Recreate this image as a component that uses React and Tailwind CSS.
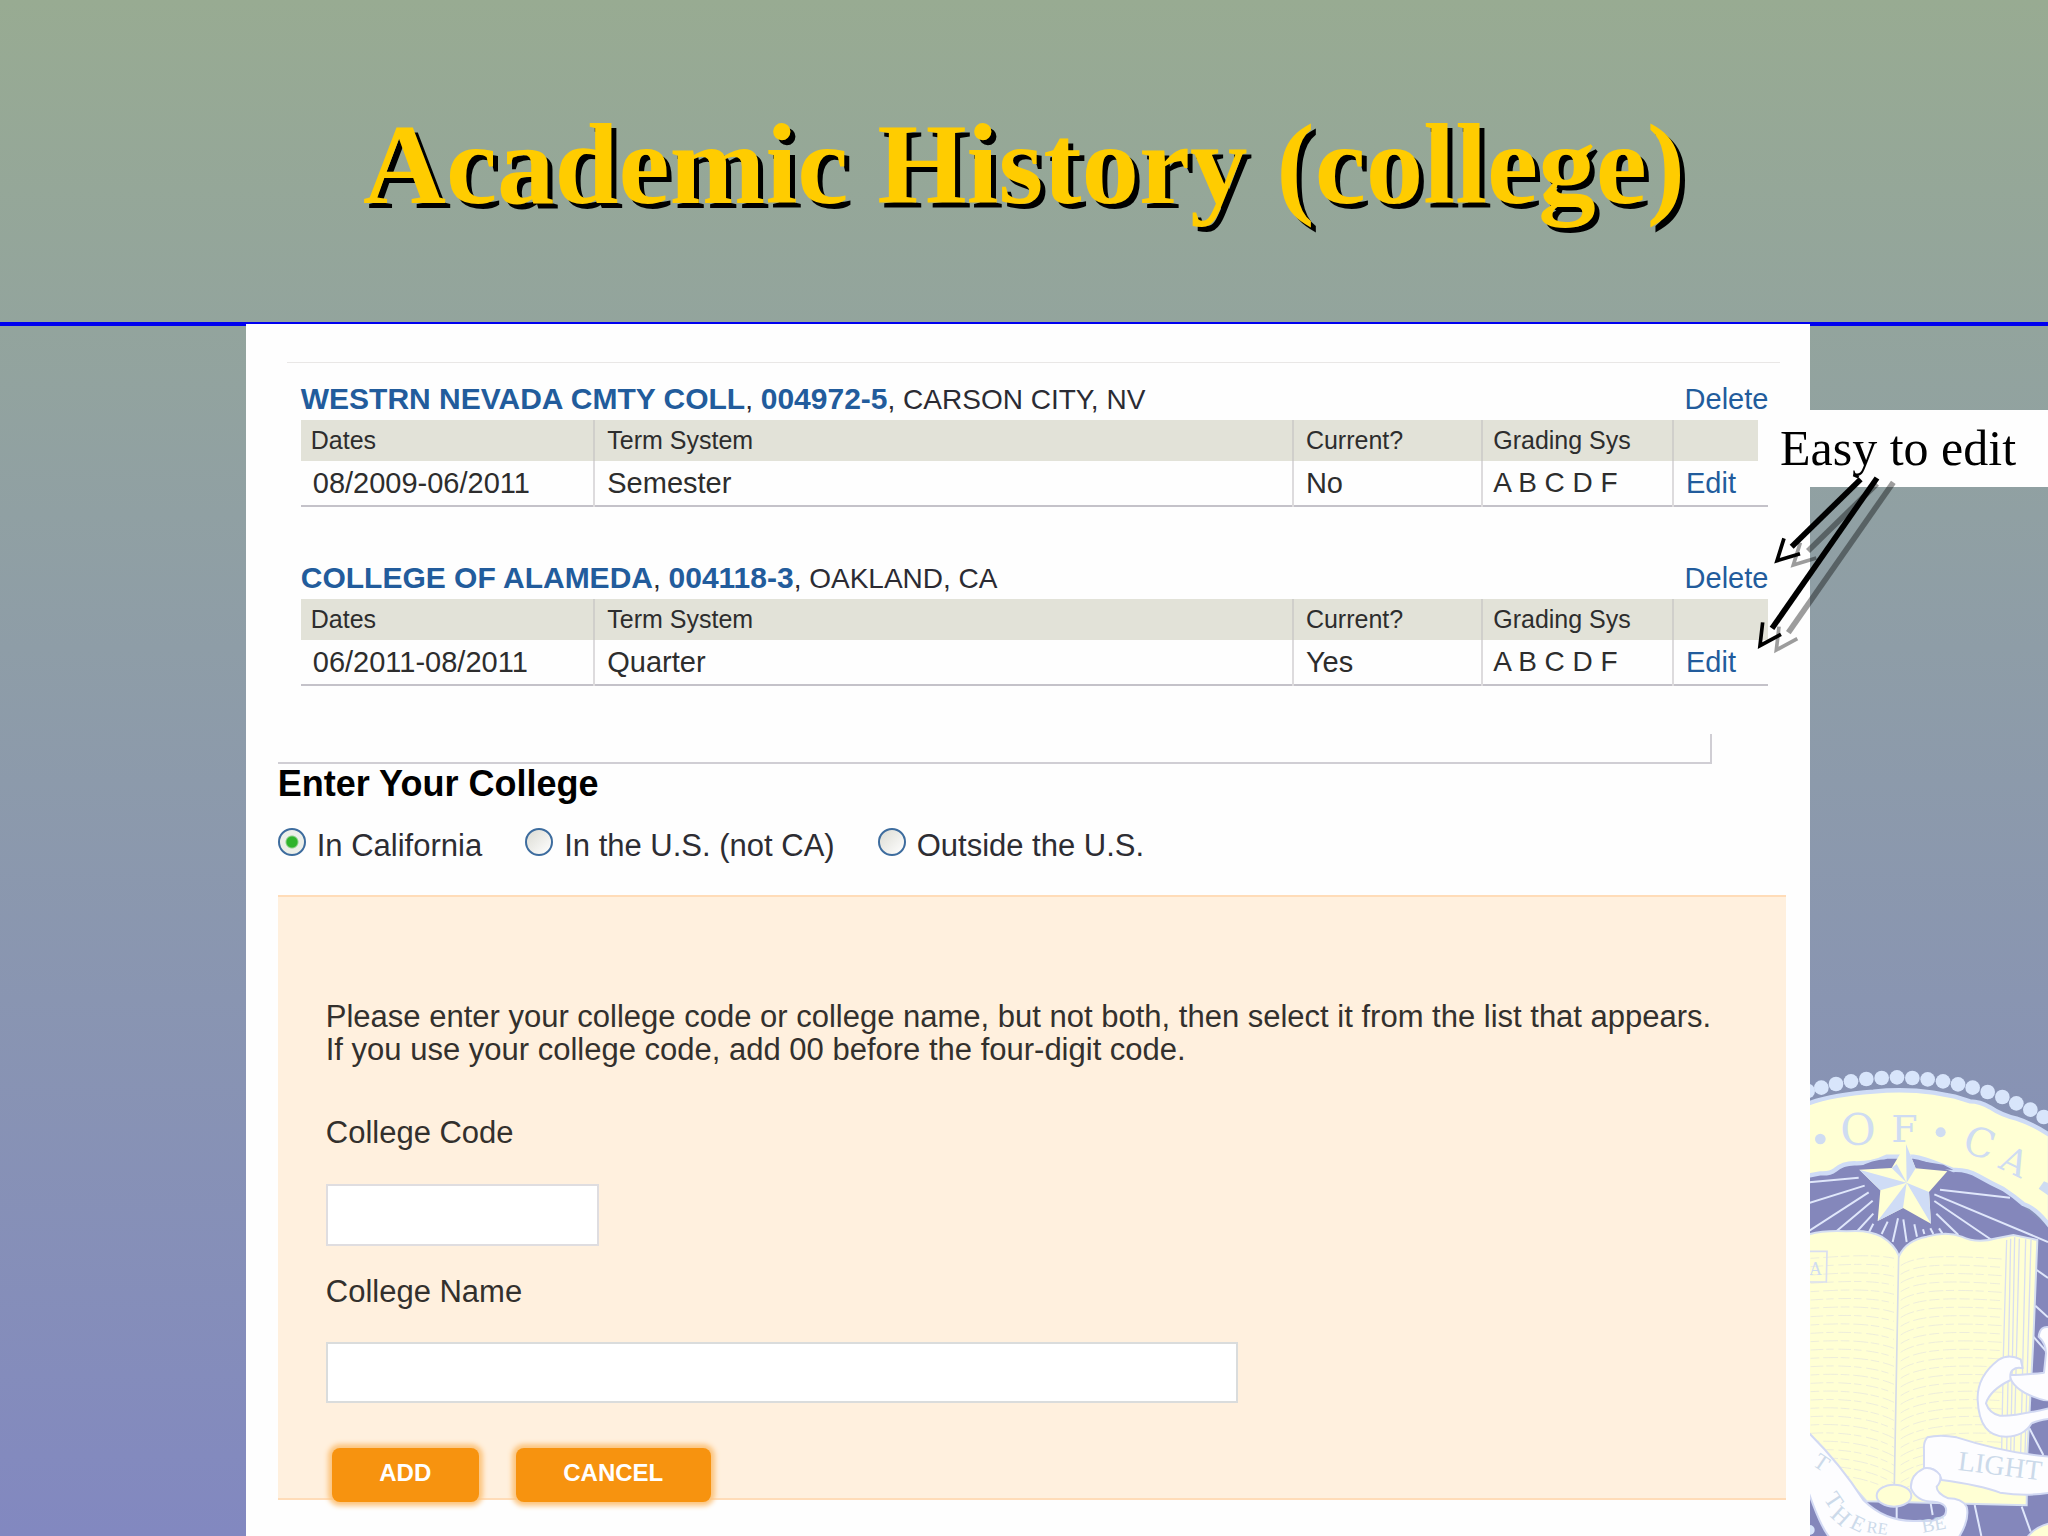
import React from "react";

const sans = "font-['Liberation_Sans',Arial,sans-serif]";
const serif = "font-['Liberation_Serif','Times_New_Roman',serif]";

const colleges = [
  {
    name: "WESTRN NEVADA CMTY COLL",
    code: "004972-5",
    place: "CARSON CITY, NV",
    dates: "08/2009-06/2011",
    term: "Semester",
    current: "No",
  },
  {
    name: "COLLEGE OF ALAMEDA",
    code: "004118-3",
    place: "OAKLAND, CA",
    dates: "06/2011-08/2011",
    term: "Quarter",
    current: "Yes",
  },
];

const locations = ["In California", "In the U.S. (not CA)", "Outside the U.S."];

function CollegeRecord({ college }) {
  return (
    <section>
      <div className="flex items-baseline justify-between pb-1 leading-8">
        <h2 className="whitespace-nowrap text-[28px] text-[#2b2b33]">
          <b className="text-[30px] text-[#225c9c]">{college.name}</b>,{" "}
          <b className="text-[30px] text-[#225c9c]">{college.code}</b>, {college.place}
        </h2>
        <a href="#delete" className="text-[29px] text-[#225c9c]">Delete</a>
      </div>
      <table className="w-full table-fixed border-collapse border-b-2 border-[#c4c2c9] text-left text-[#2d2d2d]">
        <colgroup>
          <col className="w-[20%]" />
          <col className="w-[47.6%]" />
          <col className="w-[12.9%]" />
          <col className="w-[13%]" />
          <col className="w-[6.5%]" />
        </colgroup>
        <thead>
          <tr className="h-[41px] bg-[#e2e2d8] text-[25px]">
            <th className="border-r-2 border-[#d0cfcb] px-2.5 font-normal">Dates</th>
            <th className="border-r-2 border-[#d0cfcb] px-3 font-normal">Term System</th>
            <th className="border-r-2 border-[#d0cfcb] px-3 font-normal">Current?</th>
            <th className="border-r-2 border-[#d0cfcb] px-2.5 font-normal">Grading Sys</th>
            <th className="px-3 font-normal" aria-label="Actions"></th>
          </tr>
        </thead>
        <tbody>
          <tr className="h-[45px] text-[29px] leading-9">
            <td className="border-r-2 border-[#dddbdd] px-3">{college.dates}</td>
            <td className="border-r-2 border-[#dddbdd] px-3">{college.term}</td>
            <td className="border-r-2 border-[#dddbdd] px-3">{college.current}</td>
            <td className="border-r-2 border-[#dddbdd] px-2.5 text-[28px]">A B C D F</td>
            <td className="px-3">
              <a href="#edit" className="text-[#225c9c]">Edit</a>
            </td>
          </tr>
        </tbody>
      </table>
    </section>
  );
}

function Arrows() {
  const shapes = (
    <>
      <path d="M362 58 L155 260" strokeWidth="17" />
      <path d="M132 235 L111 302 L180 281" strokeWidth="11" />
      <path d="M411 54 L96 505" strokeWidth="17" />
      <path d="M68 487 L60 557 L123 523" strokeWidth="11" />
    </>
  );
  return (
    <svg viewBox="0 0 510 600" className="absolute right-[138px] top-[136px] h-[200px] w-[170px]" fill="none" aria-hidden="true">
      <g stroke="#000" opacity="0.38" transform="translate(49 13)">{shapes}</g>
      <g stroke="#000">
        {shapes}
        <path d="M340 45 L356 52" strokeWidth="8" />
      </g>
    </svg>
  );
}

const beads = [
  [203, 153], [244, 143], [288, 132], [333, 124], [379, 117], [425, 114], [471, 112],
  [517, 114], [563, 118], [609, 124], [654, 133], [698, 143], [743, 156], [787, 171],
  [829, 190], [871, 209], [911, 231],
];

const rays = [
  "M207 427 L356 413", "M207 489 L374 437", "M207 573 L386 457", "M290 573 L398 482",
  "M352 573 L400 521", "M386 578 L400 551", "M425 582 L443 545", "M458 606 L474 535",
  "M490 538 L500 606", "M523 553 L531 590", "M549 568 L553 582", "M571 565 L580 582",
  "M597 565 L607 580", "M589 521 L655 585", "M583 483 L755 600", "M583 463 L924 606",
  "M600 449 L810 473", "M890 690 L924 714", "M886 797 L924 832", "M880 890 L924 940",
  "M868 1165 L910 1245", "M470 1395 L470 1440", "M572 1390 L578 1425",
  "M704 1395 L724 1488", "M845 1400 L872 1475",
];

function Seal() {
  const lines = Array.from({ length: 27 }, (_, i) => 655 + i * 25);
  return (
    <svg viewBox="207 0 717 1488" className="absolute bottom-0 right-0 h-[496px] w-[239px]" aria-hidden="true">
      <path d="M207 395 C400 330 600 330 740 410 L924 560 L924 1488 L207 1488Z" fill="#8487bb" />
      <g fill="#d8e5fb">
        {beads.map(([x, y]) => (
          <circle key={x} cx={x} cy={y} r="22" />
        ))}
      </g>
      <path
        d="M200 192 C260 170 330 160 400 155 Q490 145 580 158 L645 170 L690 184 Q720 184 750 202 Q785 226 830 236 Q875 250 930 286 L930 560 Q890 505 850 492 Q825 470 790 447 Q750 428 715 408 Q680 388 640 390 C600 375 560 355 520 350 L440 350 Q400 370 350 370 Q310 368 285 390 Q270 402 240 400 L200 408Z"
        fill="#ffffd4" stroke="#cfdcf6" strokeWidth="13"
      />
      <g stroke="#e0e7fb" strokeWidth="6">
        {rays.map((d) => <path key={d} d={d} />)}
      </g>
      <path d="M350 385 Q400 355 455 358 L462 376 Q440 378 425 388Z M535 362 L610 374 L640 390 L540 382Z" fill="#8487bb" />
      <g fill="#cfdcf2" className="font-['DejaVu_Serif',serif]">
        <text x="302" y="316" fontSize="130" transform="rotate(-2 302 316)">O</text>
        <text x="454" y="306" fontSize="114">F</text>
        <text x="662" y="334" fontSize="120" transform="rotate(18 662 334)">C</text>
        <text x="772" y="382" fontSize="108" transform="rotate(26 772 382)">A</text>
        <circle cx="241" cy="297" r="16" />
        <circle cx="602" cy="277" r="15" />
        <path d="M896 446 L912 424 L930 432 L930 470Z" />
      </g>
      <path d="M498 312 L527 385 L622 394 L567 456 L573 551 L489 504 L413 543 L421 451 L358 389 L455 384Z" fill="#ffffd4" />
      <path d="M498 312 L527 385 L500 428Z M358 389 L421 451 L500 428Z M413 543 L489 504 L500 428Z M573 551 L567 456 L500 428Z M455 384 L500 428 L470 372Z" fill="#cfdcf6" />
      <path
        d="M200 585 Q250 570 320 574 Q385 568 425 590 Q465 615 477 648 Q500 600 560 590 Q620 572 665 590 Q710 612 770 595 L820 585 L892 600 L880 900 L862 1240 L860 1396 L380 1384 L200 1180Z"
        fill="#ffffd4" stroke="#d6dff2" strokeWidth="6"
      />
      <g fill="none" stroke="#e4e4de" strokeWidth="2">
        {lines.map((y, i) => (
          <path key={y} strokeDasharray={i % 2 ? "38 9 22 14" : "26 12 44 8"} d={`M212 ${y} C300 ${y - 6} 400 ${y - 14 + i} 462 ${y + i * 2}`} />
        ))}
        {lines.map((y, i) => (
          <path key={y} strokeDasharray={i % 2 ? "30 12 40 9" : "44 8 24 13"} d={`M482 ${y + 22 + i} C530 ${y - 12 + i} 640 ${y - 8} 785 ${y + 2}`} />
        ))}
      </g>
      <path d="M476 648 L470 960 L463 1335" fill="none" stroke="#d5dbe8" strokeWidth="5" />
      <g fill="none" stroke="#d9def0" strokeWidth="4">
        <path d="M800 600 L790 950 L785 1230 M812 596 L800 1235 M824 592 L812 1235 M838 596 L822 1235 M857 598 L842 1240 M873 600 L855 1240" />
        <path d="M207 634 L261 634 L259 726 L207 726" strokeWidth="5" />
      </g>
      <text x="207" y="706" fontSize="54" fill="#cfdcf2" className="font-['Liberation_Serif',serif]">A</text>
      <g fill="#fdfdff" stroke="#d2d9f3" strokeWidth="6" strokeLinejoin="round">
        <path d="M896 890 Q900 855 930 862 L930 1085 Q820 1060 808 1005 Q850 1005 912 998 L918 940 Q918 910 896 890Z" />
        <path d="M848 985 L842 958 Q805 940 775 960 Q710 1010 713 1080 Q718 1192 800 1190 Q850 1190 875 1150 Q895 1140 930 1136 L930 1104 Q820 1130 780 1127 Q748 1120 738 1090 Q750 1050 812 1020 Q808 998 818 990 Q830 980 848 985Z" />
        <path d="M930 1250 Q800 1240 650 1192 Q600 1182 562 1192 Q550 1205 552 1230 L552 1285 Q592 1280 605 1320 Q720 1335 780 1358 Q860 1370 930 1358Z" />
        <path d="M552 1285 Q510 1305 513 1345 Q530 1385 580 1385 Q630 1390 615 1425 Q590 1448 540 1442 Q440 1450 370 1380 Q300 1270 200 1172 L200 1340 Q240 1460 270 1494 L655 1494 Q690 1440 680 1400 Q665 1375 625 1375 Q590 1360 590 1340 Q605 1325 600 1305 Q580 1280 552 1285Z" />
      </g>
      <ellipse cx="462" cy="1367" rx="52" ry="33" fill="#ffffd4" stroke="#d2d9f3" strokeWidth="6" />
      <path d="M860 1494 Q885 1460 930 1450 L930 1494Z" fill="#ffffd4" stroke="#d2d9f3" strokeWidth="6" />
      <circle cx="209" cy="1470" r="15" fill="#d8e5fb" />
      <path d="M878 1084 L924 1084 L924 1100 L878 1102Z" fill="#8487bb" />
      <g fill="#ccdaea" className="font-['Liberation_Serif',serif]" fontSize="80">
        <text x="652" y="1290" fontSize="84" transform="rotate(7 652 1290)">LIGHT</text>
        <text x="215" y="1274" fontSize="68" transform="rotate(34 215 1274)">T</text>
        <text x="250" y="1376" fontSize="72" transform="rotate(56 250 1376)">T</text>
        <text x="268" y="1428" fontSize="72" transform="rotate(42 268 1428)">H</text>
        <text x="326" y="1462" fontSize="66" transform="rotate(26 326 1462)">E</text>
        <text x="378" y="1476" fontSize="50" transform="rotate(8 378 1476)">RE</text>
        <text x="548" y="1478" fontSize="58" transform="rotate(-10 548 1478)">BE</text>
      </g>
    </svg>
  );
}

export default function App() {
  return (
    <div className={`relative flex min-h-screen flex-col overflow-hidden bg-linear-to-b from-[#98ab92] to-[#8288c0] ${sans}`}>
      <header className="border-b-4 border-[#0000f0] pb-[91px] pt-[99px]">
        <h1 className={`text-center text-[115px] font-bold leading-[132px] text-[#ffcc00] [text-shadow:5px_5px_0_#000] ${serif}`}>
          Academic History (college)
        </h1>
      </header>

      <Seal />

      <main className="relative -mt-0.5 flex grow flex-col">
        <div className="ml-[12%] mr-[11.6%] grow bg-[#fefefe] pb-8 pt-[38px]">
          <hr className="ml-[41px] mr-[30px] border-[#e9e7e6]" />
          <div className="ml-[55px] mr-[42px] mt-5 flex flex-col gap-[55px]">
            {colleges.map((c) => (
              <CollegeRecord key={c.code} college={c} />
            ))}
          </div>

          <form className="ml-8 mr-6" onSubmit={(e) => e.preventDefault()}>
            <div className="mr-[74px] mt-12 h-[30px] border-b-2 border-r-2 border-[#d0ced4]" />
            <h2 className="mt-0.5 text-[36px] font-bold leading-9 text-black">Enter Your College</h2>
            <fieldset className="mt-[26px] flex gap-[43px] text-[31px] leading-9 text-[#2d2d33]">
              {locations.map((label, i) => (
                <label key={label} className="flex gap-[11px]">
                  <input
                    type="radio"
                    name="location"
                    defaultChecked={i === 0}
                    className="size-7 appearance-none rounded-full border-2 border-[#3d6c9e] bg-linear-to-br from-[#dcdcd4] to-white checked:bg-[radial-gradient(circle,#2fb42c_0_5px,#ecefe9_7px)]"
                  />
                  <span>{label}</span>
                </label>
              ))}
            </fieldset>

            <div className="mt-[31px] flex flex-col items-start border-b-2 border-t-2 border-[#ffdcb8] bg-[#fff0de] px-12 pt-[103px] text-[31px] text-[#33302d]">
              <p className="leading-[33px]">
                Please enter your college code or college name, but not both, then select it from the list that appears.
                <br />
                If you use your college code, add 00 before the four-digit code.
              </p>
              <label htmlFor="code" className="mt-[49px] leading-9">College Code</label>
              <input id="code" type="text" className="mt-[33px] h-[62px] w-[273px] border-2 border-[#dfdde0] bg-white px-3" />
              <label htmlFor="name" className="mt-7 leading-9">College Name</label>
              <input id="name" type="text" className="mt-8 h-[61px] w-[912px] border-2 border-[#dadcdc] bg-white px-3" />
              <div className="-mb-1 ml-1.5 mt-[45px] flex gap-[37px] text-2xl font-bold text-white">
                <button type="submit" className="h-[54px] w-[147px] rounded-lg bg-[#f7930f] pb-1 shadow-[0_0_5px_4px_#fcc57f]">ADD</button>
                <button type="button" className="h-[54px] w-[195px] rounded-lg bg-[#f7930f] pb-1 shadow-[0_0_5px_4px_#fcc57f]">CANCEL</button>
              </div>
            </div>
          </form>
        </div>

        <div className={`absolute right-0 top-[86px] w-[290px] bg-[#fefefe] pl-[22px] text-[50px] leading-[77px] text-black ${serif}`}>
          Easy to edit
        </div>
        <Arrows />
      </main>
    </div>
  );
}
